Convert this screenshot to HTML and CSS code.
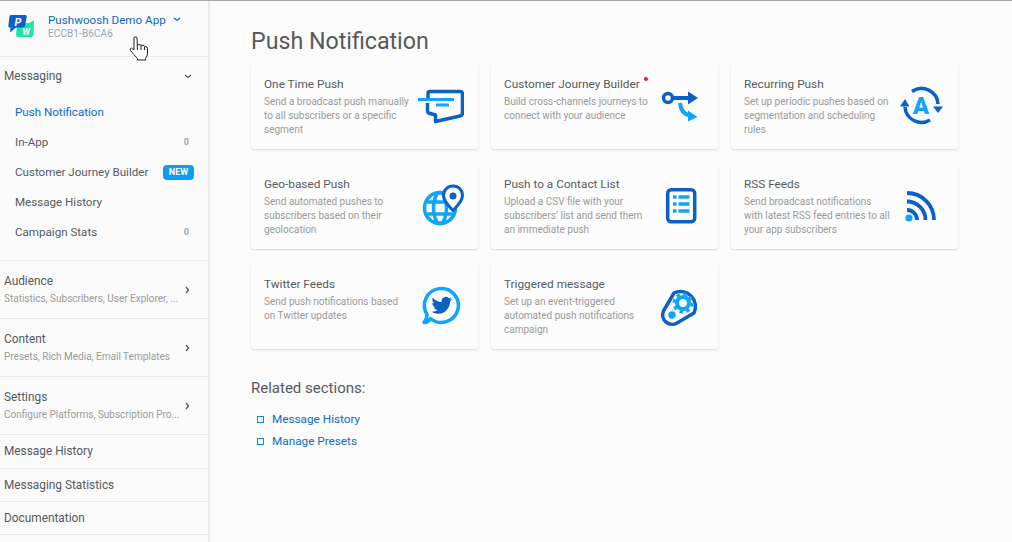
FILE: index.html
```html
<!DOCTYPE html>
<html lang="en">
<head>
<meta charset="utf-8">
<title>Push Notification</title>
<link rel="stylesheet" href="styles.css">
</head>
<body>
<div class="app">
  <aside class="sidebar">
    <header class="app-head">
      <svg class="logo" viewBox="0 0 28 26" width="28" height="26">
        <path class="logo-green" d="M11 12 L14 10 H23 L28 7.500 L27.500 21.500 Q27.300 24 25 24 H12.500 Q10 24 10 22 Z"/>
        <path class="logo-blue" d="M3.500 3.200 Q3.700 2 5 2 H19.500 Q21 2 20.800 3.500 L19 13 Q18.800 14.500 17 14.500 H10 L4 19.500 L4.500 14.500 H3.500 Q2.200 14.500 2.300 13 Z"/>
        <text class="logo-letter" x="12" y="12.500">P</text>
        <text class="logo-letter small" x="20" y="22">W</text>
      </svg>
      <div class="app-text">
        <div class="app-name">Pushwoosh Demo App
          <svg class="chev blue" viewBox="0 0 8 5" width="8" height="5"><path d="M1 1l3 2.500L7 1"/></svg>
        </div>
        <div class="app-id">ECCB1-B6CA6</div>
      </div>
    </header>

    <section class="group open">
      <div class="group-head"><span>Messaging</span>
        <svg class="chev" viewBox="0 0 8 5" width="8" height="5"><path d="M1 1l3 2.500L7 1"/></svg>
      </div>
      <ul class="sub-list">
        <li class="sub-item active"><span>Push Notification</span></li>
        <li class="sub-item"><span>In-App</span><b class="count">0</b></li>
        <li class="sub-item"><span>Customer Journey Builder</span><b class="new">NEW</b></li>
        <li class="sub-item"><span>Message History</span></li>
        <li class="sub-item"><span>Campaign Stats</span><b class="count">0</b></li>
      </ul>
    </section>

    <section class="group closed">
      <div class="group-text"><div class="group-title">Audience</div><div class="group-sub">Statistics, Subscribers, User Explorer, ...</div></div>
      <svg class="chev-r" viewBox="0 0 5 8" width="5" height="8"><path d="M1 1l2.500 3L1 7"/></svg>
    </section>
    <section class="group closed">
      <div class="group-text"><div class="group-title">Content</div><div class="group-sub">Presets, Rich Media, Email Templates</div></div>
      <svg class="chev-r" viewBox="0 0 5 8" width="5" height="8"><path d="M1 1l2.500 3L1 7"/></svg>
    </section>
    <section class="group closed">
      <div class="group-text"><div class="group-title">Settings</div><div class="group-sub">Configure Platforms, Subscription Pro...</div></div>
      <svg class="chev-r" viewBox="0 0 5 8" width="5" height="8"><path d="M1 1l2.500 3L1 7"/></svg>
    </section>

    <a class="plain plain-first">Message History</a>
    <a class="plain">Messaging Statistics</a>
    <a class="plain">Documentation</a>
  </aside>

  <main class="main">
    <h1 class="title">Push Notification</h1>
    <div class="cards">
      <article class="card">
        <div class="card-text"><h2>One Time Push</h2><p>Send a broadcast push manually to all subscribers or a specific segment</p></div>
        <svg class="icon" viewBox="0 0 48 48" width="48" height="48">
          <path class="dk w35" d="M12 16V11.500Q12 9.500 14 9.500H44Q46.500 9.500 46.500 12V31Q46.500 33.500 44 34L19.500 39.500V33L12.500 31Q11.500 30.500 11.500 29V21"/>
          <path class="lt w3" d="M2 17.500H38M20 23H33"/>
        </svg>
      </article>
      <article class="card">
        <div class="card-text"><h2>Customer Journey Builder<i class="dot"></i></h2><p>Build cross-channels journeys to connect with your audience</p></div>
        <svg class="icon" viewBox="0 0 48 48" width="48" height="48">
          <circle class="dk w35" cx="12" cy="16" r="4.500"/>
          <path class="dk w4" d="M16.500 16H34"/>
          <path class="fill-dk" d="M32 9.500L42 16L32 22.500Z"/>
          <path class="lt w4" d="M24 21Q25 32 34 33.500"/>
          <path class="fill-lt" d="M32 28.500L41.500 35L32 39.500Z"/>
        </svg>
      </article>
      <article class="card">
        <div class="card-text"><h2>Recurring Push</h2><p>Set up periodic pushes based on segmentation and scheduling rules</p></div>
        <svg class="icon" viewBox="0 0 48 48" width="48" height="48">
          <path class="dk w35" d="M16 9.500A16.500 16.500 0 0 1 42 22"/>
          <path class="fill-dk" d="M37 24.500H47L42 31Z"/>
          <path class="dk w35" d="M34 38A16.500 16.500 0 0 1 9 25"/>
          <path class="fill-dk" d="M4 24.500H13.500L9 17Z"/>
          <text class="icon-letter" x="25" y="32">A</text>
        </svg>
      </article>
      <article class="card">
        <div class="card-text"><h2>Geo-based Push</h2><p>Send automated pushes to subscribers based on their geolocation</p></div>
        <svg class="icon" viewBox="0 0 48 48" width="48" height="48">
          <circle class="lt w35" cx="24" cy="26" r="15.500"/>
          <ellipse class="lt w35" cx="24" cy="26" rx="6.500" ry="15.500"/>
          <path class="lt w35" d="M10 20H38M10 32H38"/>
          <path class="pin" d="M37 4C31.500 4 27.500 8.200 27.500 13.500C27.500 19 33 24.500 37 28.500C41 24.500 46.500 19 46.500 13.500C46.500 8.200 42.500 4 37 4Z"/>
          <circle class="fill-dk" cx="37" cy="14" r="3.500"/>
        </svg>
      </article>
      <article class="card">
        <div class="card-text"><h2>Push to a Contact List</h2><p>Upload a CSV file with your subscribers’ list and send them an immediate push</p></div>
        <svg class="icon" viewBox="0 0 48 48" width="48" height="48">
          <rect class="dk w35 paper" x="11.700" y="7.800" width="27" height="32" rx="3.500"/>
          <path class="lt w35" d="M17 15H20.500M22.500 15H33.500M17 22H20.500M22.500 22H33.500M17 29H20.500M22.500 29H33.500"/>
        </svg>
      </article>
      <article class="card">
        <div class="card-text"><h2>RSS Feeds</h2><p>Send broadcast notifications with latest RSS feed entries to all your app subscribers</p></div>
        <svg class="icon" viewBox="0 0 48 48" width="48" height="48">
          <path class="dk w38" d="M11 11A27 27 0 0 1 38 38M11 19.500A18.500 18.500 0 0 1 29.500 38M11 28A10 10 0 0 1 21 38"/>
          <circle class="fill-lt" cx="13" cy="36" r="3.600"/>
        </svg>
      </article>
      <article class="card">
        <div class="card-text"><h2>Twitter Feeds</h2><p>Send push notifications based on Twitter updates</p></div>
        <svg class="icon" viewBox="0 0 48 48" width="48" height="48">
          <path class="lt w35" d="M14.500 36.500A17 17 0 1 0 11 32.500Q11 37 8 40.500Q12 41 14.500 36.500Z"/>
          <path class="fill-dk" transform="translate(15.500 13) scale(.86)" d="M23.953 4.570a10 10 0 01-2.825.775 4.958 4.958 0 002.163-2.723c-.951.555-2.005.959-3.127 1.184a4.920 4.920 0 00-8.384 4.482C7.690 8.095 4.067 6.130 1.640 3.162a4.822 4.822 0 00-.666 2.475c0 1.710.870 3.213 2.188 4.096a4.904 4.904 0 01-2.228-.616v.060a4.923 4.923 0 003.946 4.827 4.996 4.996 0 01-2.212.085 4.936 4.936 0 004.604 3.417 9.867 9.867 0 01-6.102 2.105c-.390 0-.779-.023-1.170-.067a13.995 13.995 0 007.557 2.209c9.053 0 13.998-7.496 13.998-13.985 0-.210 0-.420-.015-.630A9.935 9.935 0 0024 4.590z"/>
        </svg>
      </article>
      <article class="card">
        <div class="card-text"><h2>Triggered message</h2><p>Set up an event-triggered automated push notifications campaign</p></div>
        <svg class="icon" viewBox="0 0 48 48" width="48" height="48">
          <path class="dk w35" d="M7.500 29L18 11A15 15 0 0 1 38 31L21 41A9.500 9.500 0 0 1 7.500 29Z"/>
          <circle class="lt w4" cx="27" cy="21" r="6"/>
          <circle class="gear" cx="27" cy="21" r="9"/>
          <circle class="fill-lt" cx="16" cy="33" r="3.700"/>
        </svg>
      </article>
    </div>

    <h3 class="related-title">Related sections:</h3>
    <ul class="related">
      <li><a>Message History</a></li>
      <li><a>Manage Presets</a></li>
    </ul>
  </main>
</div>
<svg class="cursor" viewBox="0 0 20 25" width="20" height="25">
  <path d="M5 1.500Q6.500 .5 8 1.500L8.300 9Q11 8 13 9.500Q15.500 9 16 10.500Q18.500 10.500 18.500 13V17Q18.500 20 16.500 22.500V24H8.500V22.500Q5 19 1.500 14.500Q.500 12.500 2.500 12L5 14Z"/>
  <path d="M8.300 9V14M12 9.500V14M15.500 10.500V14"/>
</svg>
</body>
</html>
```

FILE: styles.css
```css
* { box-sizing: border-box; }
html, body { margin: 0; height: 100%; }
body {
  font-family: Roboto, "Liberation Sans", sans-serif;
  background: #fbfbfb;
  border-top: 1px solid #a8a8a8;
  overflow: hidden;
  position: relative;
}
.app { display: flex; height: 541px; overflow: hidden; }

/* Sidebar */
.sidebar {
  width: 210px;
  flex: none;
  background: #fafafa;
  border-right: 2px solid #ececec;
  color: #555a60;
  font-size: 11.850px;
}
.app-head {
  height: 56px;
  display: flex;
  border-bottom: 1px solid #e8e8e8;
  padding: 12px 0 0 6px;
}
.logo { flex: none; }
.logo-blue { fill: #0b62c4; }
.logo-green { fill: #1ce6a5; }
.logo-letter {
  font: italic 700 11px Roboto, sans-serif;
  fill: #fff;
  text-anchor: middle;
}
.logo-letter.small { font-size: 9px; }
.app-text { margin-left: 14px; }
.app-name { color: #0a6bc6; font-size: 11.650px; line-height: 14px; white-space: nowrap; }
.app-id { color: #98a4b5; font-size: 10px; line-height: 14px; letter-spacing: .1px; }
.chev { fill: none; stroke: #555a60; stroke-width: 1.300; margin-left: 4px; vertical-align: 2px; }
.chev.blue { stroke: #0a6bc6; }
.chev-r { flex: none; fill: none; stroke: #555a60; stroke-width: 1.300; margin-left: 6px; margin-right: 18px; }

.group { border-bottom: 1px solid #e8e8e8; }
.group.open { height: 204px; }
.group-head {
  height: 37px;
  display: flex;
  justify-content: space-between;
  align-items: center;
  padding: 1px 16px 0 4px;
}
.sub-list { list-style: none; margin: 3px 0 0; padding: 0; font-size: 11.600px; }
.sub-item {
  height: 30px;
  display: flex;
  align-items: center;
  justify-content: space-between;
  padding: 0 14px 0 15px;
}
.sub-item.active { color: #0a6bc6; }
.count { font-size: 9px; color: #98a4b5; font-weight: 700; padding-right: 5px; }
.new {
  background: #0d9bf5;
  color: #fff;
  font-size: 9px;
  font-weight: 700;
  line-height: 15px;
  height: 15px;
  width: 31px;
  text-align: center;
  border-radius: 4px;
}
.group.closed { height: 58px; display: flex; align-items: center; justify-content: space-between; padding-left: 4px; }
.group-text { min-width: 0; }
.group-title { line-height: 16px; margin-top: -1px; }
.group-sub { font-size: 10px; line-height: 15px; margin-top: 2px; color: #9b9b9b; white-space: nowrap; }
.plain {
  display: flex;
  align-items: center;
  height: 33px;
  padding-left: 4px;
  border-bottom: 1px solid #e8e8e8;
}
.plain-first { height: 34px; padding-bottom: 1px; }

/* Main */
.main { flex: 1; padding-left: 41px; }
.title {
  margin: 0;
  height: 64px;
  padding-top: 26px;
  font-size: 23.200px;
  font-weight: 400;
  line-height: 28px;
  color: #555a60;
}
.cards {
  display: grid;
  grid-template-columns: repeat(3, 227px);
  grid-auto-rows: 84px;
  gap: 16px 13px;
}
.card {
  display: flex;
  align-items: flex-start;
  background: #fcfcfc;
  border-radius: 0 0 3px 3px;
  box-shadow: 0 1px 2px rgba(0, 0, 0, .14);
}
.card-text { width: 165px; flex: none; padding: 11px 0 0 13px; }
.card h2 { margin: 0 0 3px; font-size: 11.800px; font-weight: 400; line-height: 16px; color: #555a60; white-space: nowrap; }
.card p { margin: 0; max-width: 147px; font-size: 10px; line-height: 14px; color: #9a9a9a; }
.dot {
  display: inline-block;
  width: 4px;
  height: 4px;
  border-radius: 50%;
  background: #e8174f;
  margin-left: 4px;
  vertical-align: 7px;
}
.icon { flex: none; margin-top: 17px; }
.dk, .lt, .gear, .pin { fill: none; stroke-linejoin: round; }
.dk { stroke: #0b62c4; stroke-width: 3; }
.lt { stroke: #0ea5fa; }
.pin { stroke: #0b62c4; stroke-width: 3; fill: #fcfcfc; }
.gear { stroke: #0ea5fa; stroke-width: 3; stroke-dasharray: 3.500 3.570; }
.w3 { stroke-width: 3; }
.w35 { stroke-width: 3.500; }
.w38 { stroke-width: 3.800; }
.w4 { stroke-width: 4; }
.paper { fill: #fff; }
.fill-dk { fill: #0b62c4; }
.fill-lt { fill: #0ea5fa; }
.icon-letter {
  font: 900 24px Roboto, sans-serif;
  fill: #0ea5fa;
  text-anchor: middle;
}
.related-title { margin: 30px 0 0; font-size: 15px; font-weight: 400; line-height: 18px; color: #555a60; }
.related { list-style: none; margin: 11px 0 0; padding: 0; }
.related li {
  display: flex;
  align-items: center;
  height: 22px;
  padding-left: 6px;
  font-size: 11.750px;
  color: #0a6bc6;
}
.related li::before {
  content: "";
  flex: none;
  width: 5px;
  height: 5px;
  border: 1px solid #0e8ad8;
  margin-right: 8px;
}

/* Pointer captured in the screenshot */
.cursor {
  position: absolute;
  left: 129px;
  top: 35px;
  fill: #fff;
  stroke: #222;
  stroke-width: 1;
}
```
